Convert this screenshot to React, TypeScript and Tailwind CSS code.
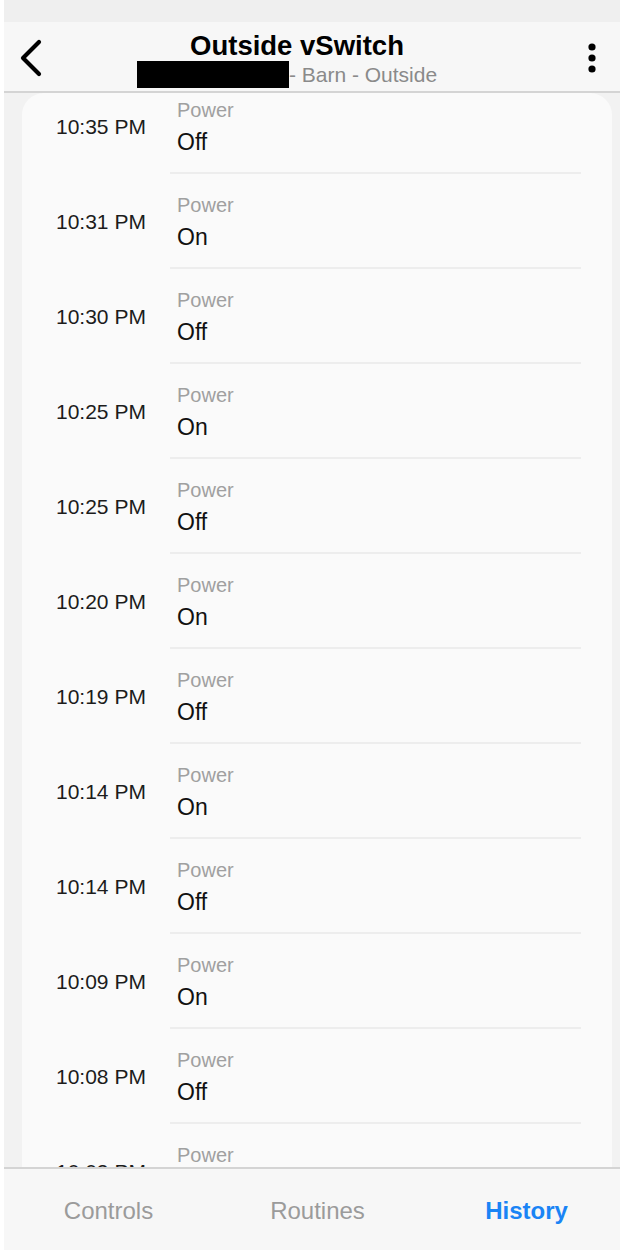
import React from "react";

const rows: [string, string][] = [
  ["10:35 PM", "Off"],
  ["10:31 PM", "On"],
  ["10:30 PM", "Off"],
  ["10:25 PM", "On"],
  ["10:25 PM", "Off"],
  ["10:20 PM", "On"],
  ["10:19 PM", "Off"],
  ["10:14 PM", "On"],
  ["10:14 PM", "Off"],
  ["10:09 PM", "On"],
  ["10:08 PM", "Off"],
  ["10:03 PM", "On"],
];

export default function App() {
  return (
    <div
      className="w-[620px] h-[1253px] bg-white pl-[4px] flex flex-col overflow-hidden"
      style={{ fontFamily: '"Liberation Sans", Arial, sans-serif' }}
    >
      <div className="flex-1 flex flex-col min-h-0">
        <div className="h-[22px] bg-[#efefef] shrink-0" />
        <div className="h-[71px] shrink-0 bg-[#f7f7f7] border-b-2 border-[#d4d4d4] flex items-center relative">
          <div className="w-[60px] pl-[14px] flex items-center mt-[3px]">
            <svg width="26" height="38" viewBox="0 0 26 38" fill="none">
              <path d="M21 3 L5 19 L21 35" stroke="#000" strokeWidth="4.2" strokeLinecap="round" strokeLinejoin="round" />
            </svg>
          </div>
          <div className="flex-1 flex flex-col items-center pr-[34px] mt-[6px]">
            <div className="text-[27.5px] font-bold text-black leading-[30px] pl-[4px]">Outside vSwitch</div>
            <div className="flex items-center text-[21px] text-[#8a8a8a] leading-[25px] pr-[16px]">
              <span className="inline-block w-[152px] h-[27px] bg-black" />
              <span>- Barn - Outside</span>
            </div>
          </div>
          <div className="w-[60px] flex justify-end pr-[24px] mt-[3px]">
            <svg width="8" height="30" viewBox="0 0 8 30">
              <circle cx="4" cy="4" r="3.6" fill="#000" />
              <circle cx="4" cy="15" r="3.6" fill="#000" />
              <circle cx="4" cy="26" r="3.6" fill="#000" />
            </svg>
          </div>
        </div>
        <div className="flex-1 min-h-0 bg-[#f2f2f2] overflow-hidden pl-[18px] pr-[8px]">
          <div className="bg-[#fafafa] rounded-t-[22px] h-[1200px] overflow-hidden">
            <div className="-mt-[14px]">
              {rows.map(([t, v], i) => (
                <div key={i} className="flex h-[95px]">
                  <div className="w-[148px] pl-[34px] flex items-center text-[21px] text-[#1c1c1c]">{t}</div>
                  <div className="flex-1 mr-[31px] border-b-2 border-[#ededed] pl-[7px] pt-[19px]">
                    <div className="text-[20px] leading-[24px] text-[#a0a0a0]">Power</div>
                    <div className="text-[23px] leading-[26px] text-[#111] mt-[7px]">{v}</div>
                  </div>
                </div>
              ))}
            </div>
          </div>
        </div>
        <div className="h-[83px] shrink-0 bg-[#f7f7f7] border-t-2 border-[#d4d4d4] grid grid-cols-[209px_209px_209px] items-center pt-[3px]">
          <div className="text-center text-[24px] text-[#9b9b9b]">Controls</div>
          <div className="text-center text-[24px] text-[#9b9b9b]">Routines</div>
          <div className="text-center text-[24px] font-bold text-[#1a84f5]">History</div>
        </div>
      </div>
      <div className="h-[3px] bg-white shrink-0" />
    </div>
  );
}
